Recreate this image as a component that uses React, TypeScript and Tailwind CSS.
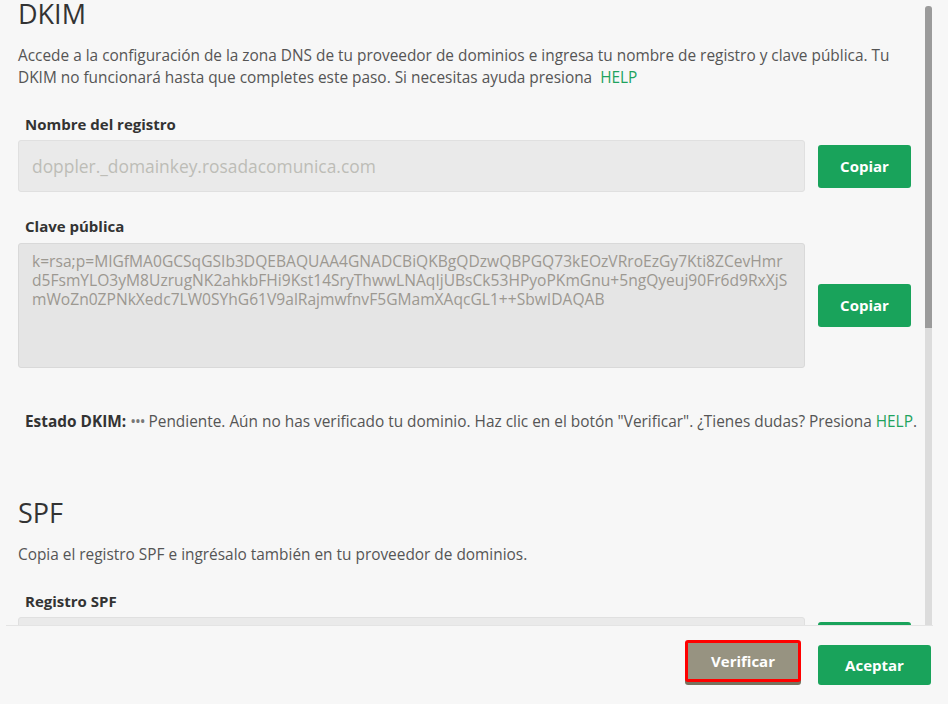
import React from "react";

const keyLines = [
  "k=rsa;p=MIGfMA0GCSqGSIb3DQEBAQUAA4GNADCBiQKBgQDzwQBPGQ73kEOzVRroEzGy7Kti8ZCevHmr",
  "d5FsmYLO3yM8UzrugNK2ahkbFHi9Kst14SryThwwLNAqIjUBsCk53HPyoPKmGnu+5ngQyeuj90Fr6d9RxXjS",
  "mWoZn0ZPNkXedc7LW0SYhG61V9alRajmwfnvF5GMamXAqcGL1++SbwIDAQAB",
];

const CopyButton: React.FC = () => (
  <button className="w-[93px] h-[43px] shrink-0 rounded-[3px] bg-[#19a35b] text-white text-[15px] font-bold">
    Copiar
  </button>
);

const App: React.FC = () => {
  return (
    <div className="w-[948px] h-[704px] bg-[#f7f7f7] flex flex-col font-['Open_Sans',sans-serif] text-[#555]">
      {/* scroll area */}
      <div className="h-[625px] flex overflow-hidden">
        <div className="w-[925px] shrink-0 overflow-hidden pl-[18px] pr-[14px]">
          <h2 className="text-[27px] leading-[28px] text-[#333]">DKIM</h2>
          <p className="mt-[17px] text-[15.4px] leading-[22px]">
            Accede a la configuración de la zona DNS de tu proveedor de dominios e ingresa tu nombre de
            registro y clave pública. Tu DKIM no funcionará hasta que completes este paso. Si necesitas
            ayuda presiona <span className="ml-1 text-[#1fa35e]">HELP</span>
          </p>

          <label className="block mt-[25px] ml-[7px] text-[15px] leading-[21px] font-bold text-[#333]">
            Nombre del registro
          </label>
          <div className="mt-[5px] flex items-center gap-[13px]">
            <div className="flex-1 h-[52px] rounded-[3px] border border-[#e0e0e0] bg-[#eaeaea] pl-[13px] flex items-center text-[17.4px] text-[#bdbdb7]">
              doppler._domainkey.rosadacomunica.com
            </div>
            <CopyButton />
          </div>

          <label className="block mt-[24px] ml-[7px] text-[15px] leading-[21px] font-bold text-[#333]">
            Clave pública
          </label>
          <div className="mt-[6px] flex items-center gap-[13px]">
            <div className="flex-1 h-[125px] rounded-[3px] border border-[#d9d9d9] bg-[#e5e5e5] pl-[13px] pt-[8px] text-[15.6px] leading-[19px] text-[#9c9891]">
              {keyLines.map((l) => (
                <div key={l} className="whitespace-nowrap">{l}</div>
              ))}
            </div>
            <CopyButton />
          </div>

          <p className="mt-[43px] ml-[7px] text-[15.4px] leading-[22px] whitespace-nowrap">
            <span className="font-bold text-[#333]">Estado DKIM:</span>{" "}
            <span className="text-[#777] tracking-[-1px]">•••</span> Pendiente. Aún no has verificado tu
            dominio. Haz clic en el botón "Verificar". ¿Tienes dudas? Presiona{" "}
            <span className="text-[#1fa35e]">HELP</span>.
          </p>

          <h2 className="mt-[66px] text-[27px] leading-[28px] text-[#333]">SPF</h2>
          <p className="mt-[17px] text-[15.4px] leading-[22px]">
            Copia el registro SPF e ingrésalo también en tu proveedor de dominios.
          </p>

          <label className="block mt-[25px] ml-[7px] text-[15px] leading-[21px] font-bold text-[#333]">
            Registro SPF
          </label>
          <div className="mt-[5px] flex items-start gap-[13px]">
            <div className="flex-1 h-[52px] rounded-[3px] border border-[#e0e0e0] bg-[#eaeaea]" />
            <div className="mt-[5px]">
              <CopyButton />
            </div>
          </div>
        </div>

        {/* scrollbar */}
        <div className="w-[7px] shrink-0 flex flex-col pt-[6px]">
          <div className="h-[322px] rounded-t-[3px] bg-[#9b9b9b]" />
          <div className="flex-1 bg-[#dcdcdc]" />
        </div>
      </div>

      {/* footer */}
      <div className="mx-[6px] mr-[15px] border-t border-[#e4e4e4] flex-1 flex items-start justify-end gap-[17px] pt-[14px] pr-[2px]">
        <button className="w-[116px] h-[42px] rounded-[3px] border-[3px] border-[#ff0000] bg-[#979381] text-white text-[15px] leading-[20px] font-bold shadow-[0_3px_0_#77735f]">
          Verificar
        </button>
        <button className="mt-[5px] w-[113px] h-[40px] rounded-[3px] bg-[#19a35b] text-white text-[15px] leading-[20px] font-bold">
          Aceptar
        </button>
      </div>
    </div>
  );
};

export default App;
